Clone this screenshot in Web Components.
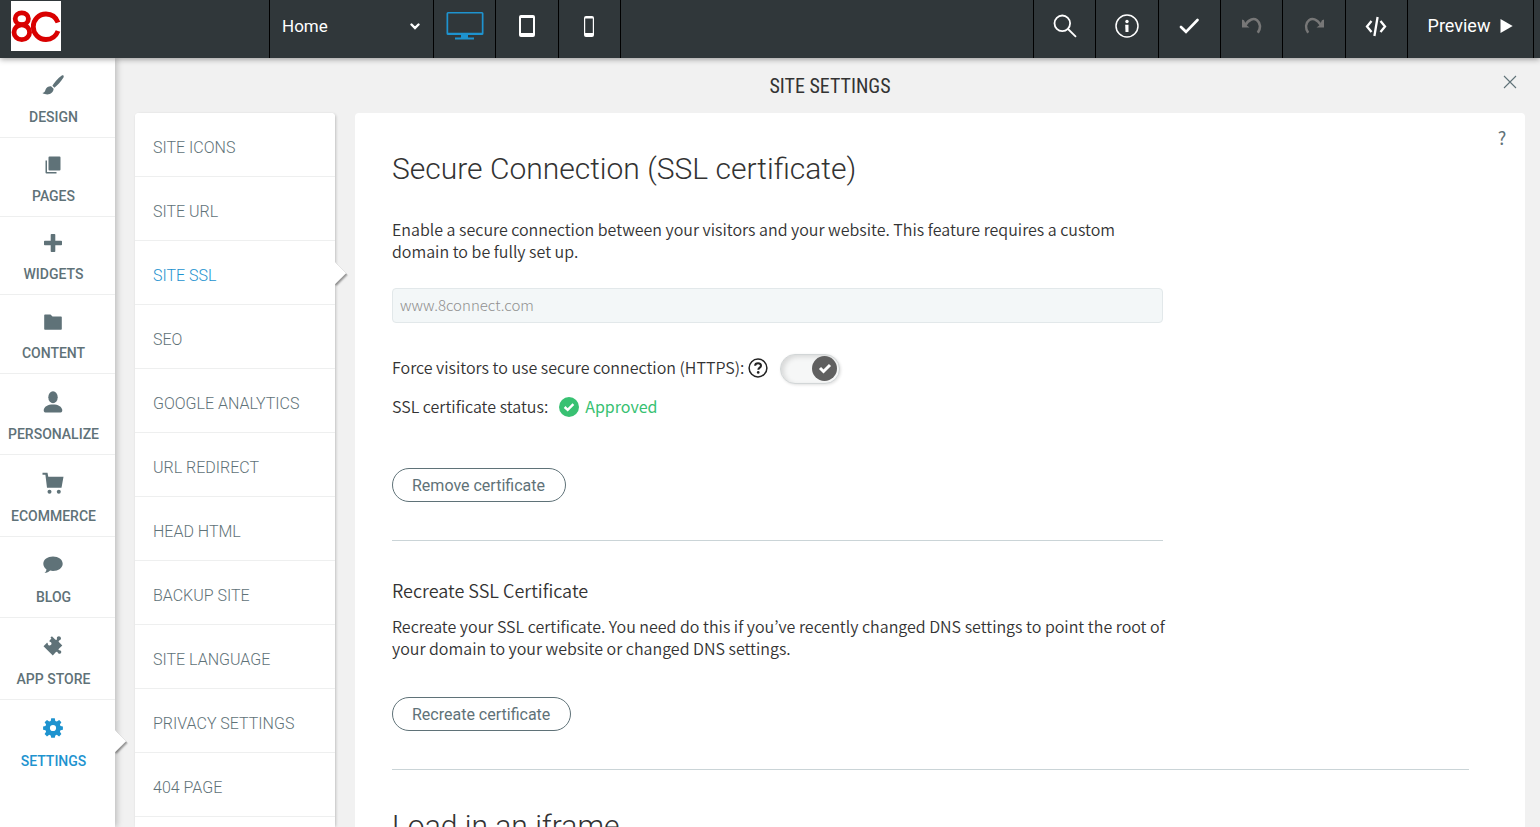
<!DOCTYPE html>
<html lang="en">
<head>
<meta charset="utf-8">
<title>Site Settings</title>
<style>
  html, body { margin: 0; height: 100%; overflow: hidden; }
  body {
    --ui: Roboto, "Liberation Sans", sans-serif;
    --copy: "Noto Sans CJK KR", "Noto Sans", sans-serif;
    --slate: #5f7278;
    --blue: #1e93cf;
    --line: #eeefef;
    font-family: var(--ui);
    background: #f1f1f1;
    color: #333;
  }
</style>
</head>
<body>
<site-editor></site-editor>
<script>
const ICONS = {
  logo: ['0 0 50 50', '<rect width="50" height="50" fill="#fff"/><g fill="none" stroke="#d90000" stroke-width="4.800"><ellipse cx="10.800" cy="17.800" rx="6.600" ry="5.900"/><ellipse cx="10.800" cy="31.200" rx="7.800" ry="7.400"/><path d="M47 21.500C45 16.300 40.500 13 35 13c-7.300 0-12.700 5.700-12.700 12.700s5.400 12.800 12.700 12.800c5.500 0 10-3.300 12-8.500"/></g>'],
  chevron: ['0 0 10 7', '<path d="M1.500 1.500L5 5l3.500-3.500" fill="none" stroke="#fff" stroke-width="2.400" stroke-linecap="round"/>'],
  desktop: ['0 0 38 28', '<path fill-rule="evenodd" d="M2 0h34a1.500 1.500 0 0 1 1.500 1.500v20a1.500 1.500 0 0 1-1.500 1.500H22v2.500h6V27.500H9V25.500h6V23H2A1.500 1.500 0 0 1 .500 21.500V1.500A1.500 1.500 0 0 1 2 0zM2.200 1.600v19.200h33.600V1.600z"/>'],
  tablet: ['0 0 18 22', '<path fill-rule="evenodd" d="M3 0h12a2 2 0 0 1 2 2v18a2 2 0 0 1-2 2H3a2 2 0 0 1-2-2V2a2 2 0 0 1 2-2zM3 3v15h12V3z"/>'],
  phone: ['0 0 12 21', '<path fill-rule="evenodd" d="M3 0h6a2 2 0 0 1 2 2v17a2 2 0 0 1-2 2H3a2 2 0 0 1-2-2V2a2 2 0 0 1 2-2zM2.200 2.500V17h7.600V2.500z"/>'],
  search: ['0 0 24 24', '<g fill="none" stroke="currentColor" stroke-width="1.800"><circle cx="9.300" cy="9.300" r="7.800"/><path d="M15 15l8 7.800"/></g>'],
  info: ['0 0 24 24', '<circle cx="12" cy="12" r="11" fill="none" stroke="currentColor" stroke-width="1.500"/><circle cx="12" cy="7.500" r="1.700"/><path d="M10.200 10.800h3.300V18h-3z"/>'],
  check: ['0 0 20 16', '<path d="M2 9l5 4.800L18.500 2" fill="none" stroke="currentColor" stroke-width="2.600" stroke-linecap="round"/>'],
  undo: ['0 0 20 18', '<path d="M3 8.500C7 1.500 12 1 15 3.200c3.600 2.800 4 8 .800 12.600" fill="none" stroke="currentColor" stroke-width="2.600"/><path d="M0 2.500V10.500h7.500l-3-2.200-2.500-5z"/>'],
  redo: ['0 0 20 18', '<g transform="matrix(-1 0 0 1 20 0)"><path d="M3 8.500C7 1.500 12 1 15 3.200c3.600 2.800 4 8 .800 12.600" fill="none" stroke="currentColor" stroke-width="2.400"/><path d="M0 2.500V10.500h7.500l-3-2.200-2.500-5z"/></g>'],
  code: ['0 0 22 21', '<g fill="none" stroke="currentColor" stroke-width="2.300"><path d="M6.500 5L2 10.500 6.500 16M15.500 5l4.500 5.500-4.500 5.500M12.600 1L9.400 20"/></g>'],
  play: ['0 0 13 14', '<path d="M.500 0L12.700 7 .500 14z"/>'],
  close: ['0 0 14 14', '<path d="M1 1l12 12M13 1L1 13" fill="none" stroke="currentColor" stroke-width="1.100"/>'],
  design: ['0 0 22 20', '<path d="M19.800.600c1.600-.900 2.500.600 1.500 2.200-2.600 4-6 7.700-8.900 9.900l-2-2C12.200 7.700 15.900 3.300 19.800.600zM9.300 11.400l2.300 2.400c-.200 4.600-5.600 7.500-11.200 4.200 2.500-.300 2.400-1.500 3.300-3.700.900-2 3.400-3.300 5.600-2.900z"/>'],
  pages: ['0 0 16 18', '<path d="M4.500.500h10a1 1 0 0 1 1 1v12a1 1 0 0 1-1 1h-10a1 1 0 0 1-1-1v-12a1 1 0 0 1 1-1zM.500 4.500H2V16h9.500v1.500H1.500a1 1 0 0 1-1-1z"/>'],
  widgets: ['0 0 20 20', '<path d="M8.500 1h3a.800.800 0 0 1 .800.800v5.900h5.900a.800.800 0 0 1 .800.800v3a.800.800 0 0 1-.800.800h-5.900v5.900a.800.800 0 0 1-.800.800h-3a.800.800 0 0 1-.800-.800v-5.900H1.800a.800.800 0 0 1-.800-.800v-3a.800.800 0 0 1 .800-.800h5.900V1.800A.800.800 0 0 1 8.500 1z"/>'],
  content: ['0 0 18 16', '<path d="M1 .500h5.500l2 2H17a.800.800 0 0 1 .800.800V15a.800.800 0 0 1-.800.800H1A.800.800 0 0 1 .200 15V1.300A.800.800 0 0 1 1 .500z"/>'],
  person: ['0 0 20 22', '<ellipse cx="10" cy="6.200" rx="4.700" ry="6"/><path d="M.800 18.500c.800-3 4-5 9.200-5s8.400 2 9.200 5c.300 1.600-.200 3-1.600 3H2.400c-1.400 0-1.900-1.400-1.600-3z"/>'],
  cart: ['0 0 22 22', '<path d="M.500.800h5l.800 4h15.200l-2 11H5L3.400 2.700H.500z"/><circle cx="7.500" cy="19.800" r="2"/><circle cx="16.800" cy="19.800" r="2"/>'],
  blog: ['0 0 20 18', '<path d="M10 .500c5.400 0 9.700 3.100 9.700 7.200S15.400 14.900 10 14.900c-1 0-2-.100-2.900-.300-1.500 1.300-3.400 2.600-5.700 2.500 1.200-.800 2-2.200 2-3.900C1.500 11.900.300 9.900.300 7.700.300 3.600 4.600.500 10 .500z"/>'],
  puzzle: ['0 0 20 20', '<path d="M7.400 1.800l1.500-1.500 3.300 3.200c1 .800 1.900.300 1.700-.900-.400-3 3.900-3.200 4.100-.200.100 1.500-1 1.700-1.700 2-.900.500-.900 1.200-.200 1.900l3.200 3.200-3.400 3.300c-.800.700-.400 1.500.500 1.500 2.800 0 2.200 3.600-.200 3.500-1.300-.100-1.300-1.200-1.800-1.700-.500-.600-1.100-.500-1.700.100l-2.900 3.200L.500 10.200l3-3c.700-.700 1.300-.300 1.300.500.100 2.500 3.500 2.300 3.700.100.100-1.300-.900-1.700-1.600-2-.700-.400-.700-1-.100-1.600l1.600-1.600z"/>'],
  gear: ['0 0 20 20', '<path fill-rule="evenodd" d="M8.200.300h3.600l.5 2.700 1.500.600L16.200 2l2.200 2.200-1.500 2.300.6 1.500 2.400.4v3.400l-2.400.5-.6 1.500 1.500 2.200-2.300 2.400-2.300-1.600-1.500.6-.5 2.400H8.200l-.5-2.400-1.500-.6L4 18.400 1.600 16l1.500-2.200-.6-1.500-2.400-.5V8.400L2.500 8l.6-1.500-1.500-2.300L4 2l2.200 1.500L7.700 3zM10 6.900a3.100 3.100 0 1 0 0 6.200 3.100 3.100 0 0 0 0-6.200z"/>'],
  help: ['0 0 20 20', '<circle cx="10" cy="10" r="8.900" fill="none" stroke="currentColor" stroke-width="1.500"/><path d="M7.100 7.700c.1-3.400 5.900-3.300 5.900 0 0 1.900-2.700 2-2.700 4.100" fill="none" stroke="currentColor" stroke-width="2"/><circle cx="10.200" cy="14.400" r="1.300"/>'],
  approved: ['0 0 20 20', '<circle cx="10" cy="10" r="10"/><path d="M5.600 10l3.100 2.900 5.700-5.700" fill="none" stroke="#fff" stroke-width="2.400"/>']
};

const define = (name, html) => customElements.define(name, class extends HTMLElement {
  constructor() {
    super();
    this.attachShadow({ mode: 'open' });
  }
  connectedCallback() {
    const template = document.createElement('template');
    template.innerHTML = typeof html === 'function' ? html(this) : html;
    this.shadowRoot.replaceChildren(template.content.cloneNode(true));
  }
});

/* Icon whose drawn size is its viewBox size */
define('ui-icon', el => {
  const [box, body] = ICONS[el.getAttribute('name')];
  const [, , w, h] = box.split(' ');
  return `<style>:host{display:inline-flex;flex:none}svg{display:block;fill:currentColor}</style>
    <svg viewBox="${box}" width="${w}" height="${h}" aria-hidden="true">${body}</svg>`;
});

define('bar-button', el => `
  <style>
    :host { display: block; box-sizing: border-box; border-left: 1px solid #000; }
    :host([wide]) { flex: none; width: 126px; }
    button { width: 100%; height: 100%; padding: 0 0 6px; margin: 0; border: 0; background: none; color: #fff;
      font: 400 18px/24px var(--ui); display: flex; align-items: center; justify-content: center; gap: 10px; }
    :host([active]) button { color: var(--blue); }
    button:disabled { color: #777; }
  </style>
  <button type="button" aria-label="${el.getAttribute('label')}" ${el.hasAttribute('off') ? 'disabled' : ''}><slot></slot><ui-icon name="${el.getAttribute('icon')}"></ui-icon></button>`);

define('page-picker', `
  <style>
    :host { display: grid; flex: none; width: 164px; box-sizing: border-box; border-left: 1px solid #000; align-items: center; padding-bottom: 6px; }
    select { grid-area: 1 / 1; appearance: none; border: 0; background: none; color: #fff; font: 400 17px/24px var(--ui); padding: 0 12px; width: 100%; height: 52px; }
    ui-icon { grid-area: 1 / 1; justify-self: end; padding-right: 13px; pointer-events: none; }
  </style>
  <select aria-label="Page"><option>Home</option></select>
  <ui-icon name="chevron"></ui-icon>`);

define('top-bar', `
  <style>
    :host { display: flex; flex: none; height: 58px; background: #30373a; box-shadow: 0 1px 6px rgba(0,0,0,.4); position: relative; z-index: 3; }
    .brand { flex: none; width: 269px; box-sizing: border-box; padding: 1px 0 0 11px; }
    .group { flex: none; display: grid; grid-auto-flow: column; grid-auto-columns: 1fr; }
    .devices { width: 187px; }
    .tools { width: 374px; }
    .gap { flex: 1; border-left: 1px solid #000; }
    .end { flex: none; width: 7px; box-sizing: border-box; border-left: 1px solid #000; }
  </style>
  <a class="brand" href="#home" aria-label="8C"><ui-icon name="logo"></ui-icon></a>
  <page-picker></page-picker>
  <div class="group devices">
    <bar-button icon="desktop" label="Desktop view" active></bar-button>
    <bar-button icon="tablet" label="Tablet view"></bar-button>
    <bar-button icon="phone" label="Phone view"></bar-button>
  </div>
  <div class="gap"></div>
  <div class="group tools">
    <bar-button icon="search" label="Search"></bar-button>
    <bar-button icon="info" label="Information"></bar-button>
    <bar-button icon="check" label="Save"></bar-button>
    <bar-button icon="undo" label="Undo" off></bar-button>
    <bar-button icon="redo" label="Redo" off></bar-button>
    <bar-button icon="code" label="Developer mode"></bar-button>
  </div>
  <bar-button icon="play" label="Preview" wide>Preview</bar-button>
  <div class="end"></div>`);

/* Pointer of the active entry: the right half of a turned square */
const ARROW = `:host([active])::after { content: ""; position: absolute; right: -8px; top: 50%; width: 16px; height: 16px; margin-top: -8px;
  background: #fff; transform: rotate(45deg); box-shadow: 2px 0 2px rgba(0,0,0,.4); clip-path: polygon(0 0, 24px 0, 24px 24px); }`;

define('rail-item', el => `
  <style>
    :host { display: block; position: relative; border-bottom: 1px solid var(--line); }
    :host([active]) { border-bottom-color: #fff; }
    ${ARROW}
    a { display: flex; flex-direction: column; align-items: center; gap: 13px; padding: 16px 8px 12px 0; color: var(--slate);
      font: 500 14px/16px var(--ui); text-decoration: none; white-space: nowrap; }
    .pic { display: flex; align-items: center; height: ${el.getAttribute('size')}px; padding-right: 1px; }
    :host([active]) a { color: var(--blue); }
  </style>
  <a href="#${el.getAttribute('icon')}"><span class="pic"><ui-icon name="${el.getAttribute('icon')}"></ui-icon></span><span><slot></slot></span></a>`);

define('side-rail', `
  <style>
    :host { display: block; flex: none; width: 115px; background: #fff; box-shadow: 2px 0 6px rgba(0,0,0,.22); position: relative; z-index: 2; }
  </style>
  <nav aria-label="Editor">
    <rail-item icon="design" size="22">DESIGN</rail-item>
    <rail-item icon="pages" size="21">PAGES</rail-item>
    <rail-item icon="widgets" size="20">WIDGETS</rail-item>
    <rail-item icon="content" size="21">CONTENT</rail-item>
    <rail-item icon="person" size="23">PERSONALIZE</rail-item>
    <rail-item icon="cart" size="24">ECOMMERCE</rail-item>
    <rail-item icon="blog" size="23">BLOG</rail-item>
    <rail-item icon="puzzle" size="24">APP STORE</rail-item>
    <rail-item icon="gear" size="24" active>SETTINGS</rail-item>
  </nav>`);

define('menu-item', `
  <style>
    :host { display: block; position: relative; border-bottom: 1px solid var(--line); }
    ${ARROW}
    a { display: block; padding: 23px 18px 16px; color: var(--slate); font: 300 16px/24px var(--ui); text-decoration: none; white-space: nowrap; }
    :host([active]) a { color: var(--blue); }
  </style>
  <a href="#section"><slot></slot></a>`);

define('settings-menu', `
  <style>
    :host { display: block; flex: none; width: 200px; background: #fff; border-radius: 4px; box-shadow: 1px 1px 3px rgba(0,0,0,.2); }
    nav { padding-bottom: 20px; background: #fff; border-radius: 4px; }
  </style>
  <nav aria-label="Site settings">
    <menu-item>SITE ICONS</menu-item>
    <menu-item>SITE URL</menu-item>
    <menu-item active>SITE SSL</menu-item>
    <menu-item>SEO</menu-item>
    <menu-item>GOOGLE ANALYTICS</menu-item>
    <menu-item>URL REDIRECT</menu-item>
    <menu-item>HEAD HTML</menu-item>
    <menu-item>BACKUP SITE</menu-item>
    <menu-item>SITE LANGUAGE</menu-item>
    <menu-item>PRIVACY SETTINGS</menu-item>
    <menu-item>404 PAGE</menu-item>
  </nav>`);

define('pill-button', `
  <style>
    :host { display: block; }
    button { height: 34px; padding: 2px 20px 0 19px; border: 1px solid var(--slate); border-radius: 17px; background: #fff; color: var(--slate); font: 400 16px/24px var(--ui); white-space: nowrap; display: block; }
  </style>
  <button type="button"><slot></slot></button>`);

define('toggle-row', `
  <style>
    :host { display: flex; align-items: center; height: 30px; }
    label { padding-bottom: 4px; }
    .help { display: flex; margin: 0 12px 2px 4px; padding: 0; border: 0; background: none; color: #222; }
    .switch { display: grid; align-items: center; width: 60px; height: 30px; }
    input { grid-area: 1 / 1; appearance: none; margin: 0; width: 60px; height: 30px; border-radius: 15px; border: 1px solid #d2d6d7; background: #f6f7f7; box-shadow: inset 3px 2px 5px rgba(0,0,0,.12), 1px 1px 3px rgba(0,0,0,.12); }
    .knob { grid-area: 1 / 1; justify-self: end; margin: 0 3px 2px 0; width: 25px; height: 25px; border-radius: 50%; background: #606060; pointer-events: none; display: flex; align-items: center; justify-content: center; }
  </style>
  <label for="https"><slot></slot></label>
  <button class="help" type="button" aria-label="Help about HTTPS"><ui-icon name="help"></ui-icon></button>
  <span class="switch"><input id="https" type="checkbox" role="switch" checked>
    <span class="knob"><svg width="14" height="12" viewBox="0 0 14 12" aria-hidden="true"><path d="M2 6l3.500 3.500L12 3" fill="none" stroke="#fff" stroke-width="3"/></svg></span></span>`);

define('ssl-panel', `
  <style>
    :host { display: flex; flex: 1; min-width: 0; align-items: flex-start; background: #fff; border-radius: 4px 4px 0 0; padding: 0 15px 0 37px; color: #333; font: 350 16px/22px var(--copy); }
    .body { flex: 1; min-width: 0; padding: 36px 0; margin-right: 4px; }
    .column { max-width: 771px; }
    h1 { margin: 0; font: 300 30px/40px var(--ui); }
    h2 { margin: 0; font: 350 18px/30px var(--copy); }
    p { margin: 0 -8px 0 0; }
    input { box-sizing: border-box; display: block; width: 100%; height: 35px; margin: 26px 0 31px; padding: 0 7px 2px; border: 1px solid #e2e8ea; border-radius: 4px; background: #f3f7f8; color: #909090; font: 300 15px/22px var(--copy); }
    .lead { margin-top: 29px; }
    .status { display: flex; align-items: center; height: 30px; margin: 8px 0 46px; }
    .status span { padding-bottom: 2px; }
    .status ui-icon { color: #38c172; margin: 0 6px 0 11px; }
    .status .ok { color: #38c172; font-weight: 400; }
    hr { height: 1px; border: 0; background: #cad4d7; margin: 38px 0 34px; }
    .retry { margin-top: 10px; margin-bottom: 38px; }
    .help { flex: none; width: 16px; margin: 12px 0 0; padding: 0; border: 0; background: none; color: var(--slate); font: 400 18px/24px var(--copy); }
    .body > hr { margin-bottom: 36px; max-width: 1077px; }
  </style>
  <div class="body">
    <div class="column">
      <h1>Secure Connection (SSL certificate)</h1>
      <p class="lead">Enable a secure connection between your visitors and your website. This feature requires a custom domain to be fully set up.</p>
      <input type="text" value="www.8connect.com" aria-label="Domain" readonly>
      <toggle-row>Force visitors to use secure connection (HTTPS):</toggle-row>
      <div class="status"><span>SSL certificate status:</span><ui-icon name="approved"></ui-icon><span class="ok">Approved</span></div>
      <pill-button>Remove certificate</pill-button>
      <hr>
      <h2>Recreate SSL Certificate</h2>
      <p class="retry">Recreate your SSL certificate. You need do this if you’ve recently changed DNS settings to point the root of your domain to your website or changed DNS settings.</p>
      <pill-button>Recreate certificate</pill-button>
    </div>
    <hr>
    <h1>Load in an iframe</h1>
  </div>
  <button class="help" type="button" aria-label="Help">?</button>`);

define('settings-page', `
  <style>
    :host { display: flex; flex-direction: column; flex: 1; min-width: 0; padding: 0 15px 0 20px; }
    header { display: grid; grid-template-columns: 30px 1fr 30px; align-items: center; flex: none; height: 55px; }
    h1 { grid-column: 2; margin: 0; text-align: center; font: 400 20px/24px "Roboto Condensed", var(--ui); }
    header button { align-self: start; height: 50px; padding: 0; border: 0; background: none; color: var(--slate); }
    .cols { display: flex; flex: 1; min-height: 0; gap: 20px; }
  </style>
  <header><h1>SITE SETTINGS</h1><button type="button" aria-label="Close"><ui-icon name="close"></ui-icon></button></header>
  <div class="cols"><settings-menu></settings-menu><ssl-panel></ssl-panel></div>`);

define('site-editor', `
  <style>
    :host { display: flex; flex-direction: column; height: 100vh; overflow: hidden; }
    .main { display: flex; flex: 1; min-height: 0; }
  </style>
  <top-bar></top-bar>
  <div class="main"><side-rail></side-rail><settings-page></settings-page></div>`);
</script>
</body>
</html>
